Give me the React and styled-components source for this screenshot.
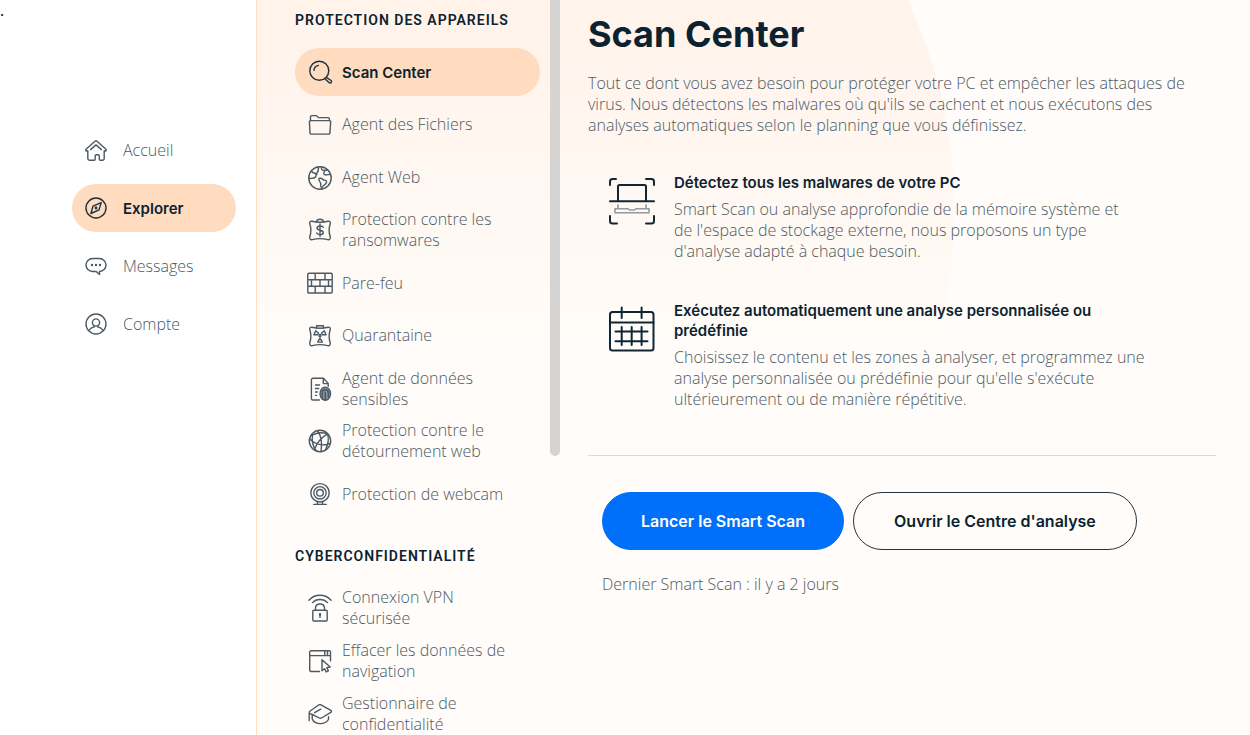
import React from "react";
import styled, { createGlobalStyle, css } from "styled-components";

const GlobalStyle = createGlobalStyle`
  *, *::before, *::after { box-sizing: border-box; }
  body {
    margin: 0;
    background: #ffffff;
    color: #0b2230;
    font-family: "Open Sans", "Noto Sans", sans-serif;
    font-size: 16px;
    font-weight: 300;
    line-height: 21px;
  }
`;

const strong = css`
  font-family: Inter, "Liberation Sans", sans-serif;
  font-weight: 600;
`;

const Page = styled.div`
  display: flex;
  height: 100vh;
  overflow: hidden;
`;

const Sidebar = styled.aside`
  flex: none;
  width: 256px;
`;

const Dot = styled.p`
  margin: 0;
  height: 126px;
  font-weight: 400;
  color: #000000;
`;

const NavList = styled.ul`
  display: flex;
  flex-direction: column;
  gap: 10px;
  margin: 0;
  padding: 0 20px 0 72px;
  list-style: none;
`;

const NavLink = styled.a`
  display: flex;
  align-items: center;
  gap: ${({ $wide }) => ($wide ? "15px" : "10px")};
  height: 48px;
  padding: 0 20px 0 ${({ $wide }) => ($wide ? "12px" : "13px")};
  border-radius: 24px;
  color: #4c5a64;
  text-decoration: none;
  ${({ $active }) =>
    $active &&
    css`
      ${strong}
      font-size: 15px;
      color: #0b2230;
      background: #ffdcbf;
    `}
`;

const Icon = styled.svg`
  flex: none;
  width: 24px;
  height: 24px;
  overflow: visible;
  fill: none;
  stroke: ${({ $active }) => ($active ? "#1c313e" : "#4a5963")};
  stroke-width: 1.4;
  stroke-linecap: round;
  stroke-linejoin: round;
`;

const Content = styled.div`
  display: flex;
  flex: 1;
  min-width: 0;
  border-left: 1px solid #ffdfc4;
  background:
    linear-gradient(to bottom, rgba(255, 252, 249, 0), #fffcf9 360px),
    radial-gradient(circle 493px at 205px 210px, #fff3ea 492px, #fffcf9 493px);
`;

const Menu = styled.nav`
  flex: none;
  width: 293px;
  padding: 10px 10px 0 38px;
  overflow: hidden;
`;

const MenuTitle = styled.h2`
  margin: ${({ $spaced }) => ($spaced ? "28px" : "0")} 0 17px;
  font-family: Roboto, "Liberation Sans", sans-serif;
  font-size: 14px;
  font-weight: 600;
  line-height: 21px;
  letter-spacing: 1px;
  text-transform: uppercase;
  white-space: nowrap;
`;

const MenuList = styled.ul`
  display: flex;
  flex-direction: column;
  justify-content: space-between;
  gap: 4px;
  min-height: ${({ $minHeight }) => $minHeight};
  margin: 0;
  padding: 0;
  list-style: none;
`;

const ScrollTrack = styled.div`
  flex: none;
  width: 10px;
`;

const ScrollThumb = styled.div`
  height: 62%;
  border-radius: 0 0 5px 5px;
  background: #d5d4d2;
`;

const Main = styled.main`
  flex: 1;
  min-width: 0;
  padding: 12px 34px 0 28px;
`;

const Title = styled.h1`
  margin: 0 0 17px;
  font-family: Inter, "Liberation Sans", sans-serif;
  font-size: 36px;
  font-weight: 700;
  line-height: 44px;
`;

const Text = styled.p`
  margin: 0;
  color: #4c5a64;
`;

const Features = styled.section`
  display: flex;
  flex-direction: column;
  gap: 39px;
  padding: 37px 0 45px 20px;
`;

const Feature = styled.article`
  display: flex;
  gap: 18px;
`;

const FeatureIcon = styled.svg`
  flex: none;
  width: 48px;
  height: 48px;
  margin-top: 4px;
  fill: none;
  stroke: #0f2735;
  stroke-width: 2;
  stroke-linecap: round;
  stroke-linejoin: round;
`;

const FeatureBody = styled.div`
  max-width: 472px;
`;

const FeatureTitle = styled.h3`
  ${strong}
  margin: 0 0 6px;
  font-size: 15px;
  line-height: 20px;
`;

const Footer = styled.footer`
  display: flex;
  flex-direction: column;
  gap: 24px;
  padding: 36px 14px 0;
  border-top: 1px solid #d9dadb;
`;

const Actions = styled.div`
  display: flex;
  flex-wrap: wrap;
  gap: 9px;
`;

const Button = styled.button`
  ${strong}
  height: 58px;
  padding: 0 ${({ $primary }) => ($primary ? "38px" : "40px")};
  border: 1px solid ${({ $primary }) => ($primary ? "#0070fa" : "#22343f")};
  border-radius: 29px;
  background: ${({ $primary }) => ($primary ? "#0070fa" : "transparent")};
  color: ${({ $primary }) => ($primary ? "#ffffff" : "#0b2230")};
  font-size: 16px;
  line-height: 21px;
  white-space: nowrap;
`;

const icons = {
  home: (
    <>
      <path d="M2 11.3 11 3.2a1.5 1.5 0 0 1 2 0l9 8.1c.8.8.1 1.9-1 1.600l-.8-.2V20.500a1.700 1.700 0 0 1-1.700 1.700h-2.200a1 1 0 0 1-1-1v-3.200a1.200 1.200 0 0 0-1.200-1.200h-1.700a1.200 1.200 0 0 0-1.200 1.200v3.200a1 1 0 0 1-1 1H5.500a1.700 1.700 0 0 1-1.700-1.700v-7.800l-.8.2c-1.100.3-1.800-.8-1-1.600z" />
      <path d="M6.600 11.600 12 6.900l5.400 4.700" />
    </>
  ),
  compass: (
    <>
      <circle cx="12" cy="12" r="10" />
      <path d="M17.200 6.600 15 13.900 6.900 17.500 9 10.100z" />
      <circle cx="12" cy="12" r=".7" />
    </>
  ),
  chat: (
    <>
      <path d="M8.500 4.500h7a6.200 6.200 0 0 1 0 13v3l-3.300-3H8.500a6.500 6.500 0 0 1 0-13z" />
      <path strokeWidth="2.400" d="M8 11h.01M12 11h.01M16 11h.01" />
    </>
  ),
  user: (
    <>
      <circle cx="12" cy="12" r="10" />
      <circle cx="12" cy="10.500" r="3.600" />
      <path d="M10 13.500v1.500c-1.800.6-3.600 1-4.600 3M14 13.500v1.500c1.800.6 3.600 1 4.600 3" />
    </>
  ),
  search: (
    <>
      <circle cx="11.300" cy="10.800" r="9.500" />
      <path d="M6 10.200A5.500 5.500 0 0 1 10.400 5.400" />
      <path d="m18.300 17.300 4.800 3.200c1.300 1.200-.5 3.200-1.900 2.200l-4.300-3.900" />
    </>
  ),
  folder: (
    <>
      <path d="M2.500 7.500V3.800A1.200 1.200 0 0 1 3.700 2.600h4.200c1.500 0 1.500 2 3 2h9.300A1.200 1.200 0 0 1 21.400 5.800v1.700" />
      <path d="M2.500 7.600h19.200a1 1 0 0 1 1 1l-.8 11.300a1.300 1.300 0 0 1-1.300 1.200H3.300A1.300 1.300 0 0 1 2 19.900L1.400 8.700a1 1 0 0 1 1.100-1.100z" />
    </>
  ),
  globe: (
    <>
      <circle cx="12" cy="12" r="11.200" />
      <path d="M1 12.500c2.500-.5 5 .5 6.500-1.500 1.500-1.900-.5-2.700 1.500-4.200 1.600-1.300 1.700-2.800 1.300-5.600M3.800 5.500C5.500 8 7.500 6.500 9 8.500M13.500 1c-.5 2.500 1 3.600 3 3.200.8 1.700-1.500 2.300-.6 4 1.200 1.900 3.700.2 6.400 0M11 12.500c2.500-.8 3 .3 4.500 1.500 2 .4 3.500.4 3 2.500-1 2.500-3.500 2.500-4 4.500l-1 2M11 12.500c0 1.500-.3 2.500 1 3.500 1.500 1.500.2 3 1 5M19.500 4l-3 .5" />
    </>
  ),
  ransom: (
    <>
      <path d="M4 3.200c4.500 1.200 11.500 1.200 16 0 1.600-.3 2.700 1 2.200 2.600-1.300 4-1.300 9.200 0 13 .5 1.800-.7 3.400-2.500 2.900-4.600-1.300-10.800-1.300-15.400 0-1.800.5-3-1.100-2.500-2.900 1.300-3.800 1.300-9 0-13C1.300 4.200 2.400 2.900 4 3.200z" />
      <path d="M8.500 3.700c.3-3.200 6.700-3.200 7 0M12 6v12.500M15.300 9.300c-.8-1.900-6.100-1.900-6.300.7-.2 2.800 6.500 1.600 6.300 4.600-.2 2.700-5.700 2.500-6.600.3" />
    </>
  ),
  wall: (
    <path d="M.8 2.200h22.400a1 1 0 0 1 1 1v17.800a1 1 0 0 1-1 1H.8a1 1 0 0 1-1-1V3.200a1 1 0 0 1 1-1zM0 8.700h24M0 15.300h24M7.200 2.200v6.500M17 2.200v6.500M12 8.700v6.600M3.500 8.700v6.600M20.500 8.700v6.600M7.200 15.300V22M17 15.300V22" />
  ),
  quarantine: (
    <>
      <path d="M4 3.200c4.500 1.200 11.500 1.200 16 0 1.600-.3 2.700 1 2.200 2.600-1.300 4-1.300 9.200 0 13 .5 1.800-.7 3.400-2.500 2.900-4.600-1.300-10.800-1.300-15.400 0-1.800.5-3-1.100-2.500-2.900 1.300-3.800 1.300-9 0-13C1.300 4.200 2.400 2.900 4 3.200z" />
      <path d="M8.500 3.700V1.800h7v1.900M10.500 9 7.700 6.800 5.900 10.800h3.700zM13.500 9l2.800-2.200 1.800 4h-3.700zM12 13v2.500M11 15.500h2l1.300 2.600H9.700z" />
      <circle cx="12" cy="11.500" r="1" />
    </>
  ),
  sensitive: (
    <>
      <path d="M11.500 23H5A1.600 1.600 0 0 1 3.400 21.400V2.800A1.600 1.600 0 0 1 5 1.200h10.500l4.700 5.200v3M15.300 1.500v5.100h4.500M7.500 8h4M7.500 11.500h3.200M7.500 15h1.800M7.500 18.400h1" />
      <ellipse cx="17.300" cy="16.700" rx="5.200" ry="6.500" fill="#87919a" strokeDasharray="2 .8" />
      <path d="M14.200 21v-5.500c.4-3.600 5.800-3.600 6.200 0V20M17.300 15.500v7" />
    </>
  ),
  network: (
    <>
      <circle cx="12" cy="12" r="10.700" />
      <path d="M9.500 1.800c4 5 4.800 12 3.500 20.700M1.500 10c5.500 5.500 13.500 7.500 20.300 4.500M4.600 4.600C3.500 12 4.500 17.500 8.500 22M3.300 6.500c5-2.800 11.200-3.500 16.200-1.700M19.500 4.800C13 8.500 8.700 14 6.500 20.500M19.500 4.800c1.500 4.500 1 10-2 16.300" />
    </>
  ),
  webcam: (
    <>
      <circle cx="12" cy="10.800" r="9.200" />
      <circle cx="12" cy="10.800" r="6.200" />
      <circle cx="12" cy="10.800" r="3.300" />
      <path d="M9.500 19.700v2.700M14.500 19.700v2.700M5.800 22.400h12.400" />
    </>
  ),
  vpn: (
    <>
      <path d="M1 4.300C6.500-2.400 17.500-2.400 23 4.300M4.500 6.600C8.300 2.400 15.700 2.400 19.500 6.600M7.500 14.200v-2c0-5.600 9-5.600 9 0v2" />
      <rect x="4.800" y="14.200" width="14.400" height="10.800" rx="1" />
      <path strokeWidth="2.400" d="M12 18.200v.3" />
      <path d="M12 18.200v3.200" />
    </>
  ),
  browser: (
    <>
      <path d="M11.500 22.500H3a1.300 1.300 0 0 1-1.300-1.300V3.100A1.300 1.300 0 0 1 3 1.800h18.200a1.300 1.300 0 0 1 1.300 1.300v8.800M1.700 6.600h20.800M16.800 2.200v4M19.500 2.200v4" />
      <path d="M14 10.800v11l2.600-2.100 1.600 3.200 2.200-1.100-1.600-3.200 3.400-.6z" />
    </>
  ),
  privacy: (
    <path d="M1.200 18.500V11c0-1 .3-1.500 1-2L11 2.800a2 2 0 0 1 2 0l9.800 5.500c.9.600.9 1.500 0 2L13.500 16a2.300 2.300 0 0 1-2.200 0L4.200 12.300M6.500 10.700l6.300-3.500M1.500 11.500l2.700.8v4.500c1.800 5.800 12.500 6.700 16.300.7v-2.700" />
  ),
};

const mainNav = [
  { icon: "home", label: "Accueil" },
  { icon: "compass", label: "Explorer", active: true },
  { icon: "chat", label: "Messages" },
  { icon: "user", label: "Compte" },
];

const deviceItems = [
  { icon: "search", label: "Scan Center", active: true },
  { icon: "folder", label: "Agent des Fichiers" },
  { icon: "globe", label: "Agent Web" },
  { icon: "ransom", label: "Protection contre les ransomwares" },
  { icon: "wall", label: "Pare-feu" },
  { icon: "quarantine", label: "Quarantaine" },
  { icon: "sensitive", label: "Agent de données sensibles" },
  { icon: "network", label: "Protection contre le détournement web" },
  { icon: "webcam", label: "Protection de webcam" },
];

const privacyItems = [
  { icon: "vpn", label: "Connexion VPN sécurisée" },
  { icon: "browser", label: "Effacer les données de navigation" },
  { icon: "privacy", label: "Gestionnaire de confidentialité" },
];

function NavItem({ icon, label, active, wide }) {
  return (
    <li>
      <NavLink href="#" $active={active} $wide={wide} aria-current={active ? "page" : undefined}>
        <Icon viewBox="0 0 24 24" $active={active} aria-hidden="true">
          {icons[icon]}
        </Icon>
        <span>{label}</span>
      </NavLink>
    </li>
  );
}

export default function App() {
  return (
    <>
      <GlobalStyle />
      <Page>
        <Sidebar>
          <Dot>.</Dot>
          <nav>
            <NavList>
              {mainNav.map((item) => (
                <NavItem key={item.label} wide {...item} />
              ))}
            </NavList>
          </nav>
        </Sidebar>
        <Content>
          <Menu>
            <MenuTitle>Protection des appareils</MenuTitle>
            <MenuList $minHeight="470px">
              {deviceItems.map((item) => (
                <NavItem key={item.label} {...item} />
              ))}
            </MenuList>
            <MenuTitle $spaced>Cyberconfidentialité</MenuTitle>
            <MenuList $minHeight="154px">
              {privacyItems.map((item) => (
                <NavItem key={item.label} {...item} />
              ))}
            </MenuList>
          </Menu>
          <ScrollTrack>
            <ScrollThumb />
          </ScrollTrack>
          <Main>
            <Title>Scan Center</Title>
            <Text>
              Tout ce dont vous avez besoin pour protéger votre PC et empêcher les attaques de virus. Nous
              détectons les malwares où qu'ils se cachent et nous exécutons des analyses automatiques selon le
              planning que vous définissez.
            </Text>
            <Features>
              <Feature>
                <FeatureIcon viewBox="0 0 48 48" aria-hidden="true">
                  <path d="M2 8V4.500A2.500 2.500 0 0 1 4.500 2H8M38 2h5.500A2.500 2.500 0 0 1 46 4.500V8M2 39v5a2.500 2.500 0 0 0 2.500 2.500H9M46 39v5a2.500 2.500 0 0 1-2.500 2.500H38M2 24.200h44M10 24V9.500A1.500 1.500 0 0 1 11.500 8h25A1.500 1.500 0 0 1 38 9.500V24" />
                  <path stroke="#909a9f" strokeWidth="1.600" d="M10 28v3.500M38 28v3.500M7 31.800h13l1.500 1.200h5l1.500-1.200h13v4H7z" />
                </FeatureIcon>
                <FeatureBody>
                  <FeatureTitle>Détectez tous les malwares de votre PC</FeatureTitle>
                  <Text>
                    Smart Scan ou analyse approfondie de la mémoire système et de&nbsp;l'espace de stockage externe,
                    nous proposons un type d'analyse adapté à chaque besoin.
                  </Text>
                </FeatureBody>
              </Feature>
              <Feature>
                <FeatureIcon viewBox="0 0 48 48" aria-hidden="true">
                  <rect x="2" y="7" width="43.500" height="38.500" rx="2.500" />
                  <path d="M2 17.500h43.500M13.700 2.500V13M33.600 2.500V13M13.700 22v18M23.700 22v18M33.600 22v18M7.500 26.500h32M7.500 36.200h32" />
                </FeatureIcon>
                <FeatureBody>
                  <FeatureTitle>Exécutez automatiquement une analyse personnalisée ou prédéfinie</FeatureTitle>
                  <Text>
                    Choisissez le contenu et les zones à analyser, et programmez une analyse personnalisée ou
                    prédéfinie pour qu'elle s'exécute ultérieurement ou de manière répétitive.
                  </Text>
                </FeatureBody>
              </Feature>
            </Features>
            <Footer>
              <Actions>
                <Button type="button" $primary>
                  Lancer le Smart Scan
                </Button>
                <Button type="button">Ouvrir le Centre d'analyse</Button>
              </Actions>
              <Text>Dernier Smart Scan : il y a 2 jours</Text>
            </Footer>
          </Main>
        </Content>
      </Page>
    </>
  );
}
